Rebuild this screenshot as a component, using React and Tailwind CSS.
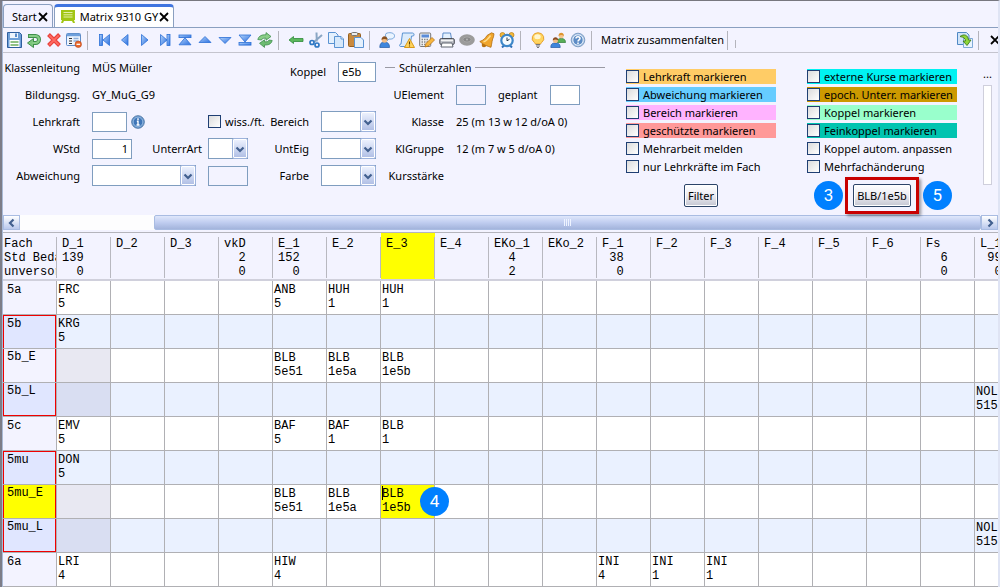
import React from "react";

const BLUE = "#2a6fd6";

const icons = {
  save: (
    <>
      <path d="M1.5.5h12l2 2v13h-14z" fill="#6fa0d8" stroke="#2f5f9e" />
      <rect x="4" y="1" width="8" height="5" fill="#eef4fc" />
      <rect x="9" y="1.5" width="2" height="3.5" fill="#5b8cc9" />
      <rect x="3.5" y="8" width="10" height="7" fill="#fff" />
      <path d="M4.5 10h8M4.5 13h8" stroke="#6cae5c" strokeWidth="1.4" />
    </>
  ),
  undo: (
    <>
      <path d="M2 4h7.500a3.500 3.500 0 0 1 0 7H6.500" fill="none" stroke="#3f8f4c" strokeWidth="4" />
      <path d="M7.500 6.500v9L1.500 11z" fill="#7cc67c" stroke="#3f8f4c" />
      <path d="M2.800 4h6.700a3.500 3.500 0 0 1 0 7H6" fill="none" stroke="#86cc86" strokeWidth="2.200" />
    </>
  ),
  remove: (
    <>
      <path d="M2.500 2.500l11 11M13.500 2.500l-11 11" stroke="#e8413c" strokeWidth="4" />
      <path d="M3.300 3.300l9.500 9.500M12.700 3.300l-9.500 9.500" stroke="#ff6a62" strokeWidth="1.800" />
    </>
  ),
  form: (
    <>
      <rect x=".5" y="1.500" width="14" height="12" rx="1" fill="#eef4fd" stroke="#5f8cc8" />
      <path d="M1 3h13" stroke="#6fa0dc" strokeWidth="2.500" />
      <path d="M3 6.500h3M3 9h3M3 11.500h3" stroke="#333" />
      <path d="M7.500 6.500h5M7.500 9h5" stroke="#8fb0dc" strokeWidth="1.500" />
      <circle cx="12.300" cy="12.300" r="3.200" fill="#e8672c" stroke="#b8451a" strokeWidth=".6" />
      <path d="M10.500 12.300h3.600" stroke="#fff" strokeWidth="1.300" />
    </>
  ),
  first: (
    <>
      <rect x="2.500" y="2.500" width="3" height="11" fill="url(#nav)" stroke={BLUE} strokeWidth=".8" />
      <path d="M12.500 2.500v11L6 8z" fill="url(#nav)" stroke={BLUE} strokeWidth=".8" />
    </>
  ),
  prev: <path d="M11 2.500v11L4.500 8z" fill="url(#nav)" stroke={BLUE} strokeWidth=".8" />,
  next: <path d="M4.500 2.500v11L11 8z" fill="url(#nav)" stroke={BLUE} strokeWidth=".8" />,
  last: (
    <>
      <path d="M3.500 2.500v11L10 8z" fill="url(#nav)" stroke={BLUE} strokeWidth=".8" />
      <rect x="10" y="2.500" width="3" height="11" fill="url(#nav)" stroke={BLUE} strokeWidth=".8" />
    </>
  ),
  top: (
    <>
      <rect x="2" y="3" width="12" height="2.600" fill="url(#nav)" stroke={BLUE} strokeWidth=".8" />
      <path d="M8 5.800l6 7H2z" fill="url(#nav)" stroke={BLUE} strokeWidth=".8" />
    </>
  ),
  up: <path d="M8 4.500l6 6H2z" fill="url(#nav)" stroke={BLUE} strokeWidth=".8" />,
  down: <path d="M8 11.500l6-6H2z" fill="url(#nav)" stroke={BLUE} strokeWidth=".8" />,
  bottom: (
    <>
      <path d="M8 10l6-7H2z" fill="url(#nav)" stroke={BLUE} strokeWidth=".8" />
      <rect x="2" y="10.500" width="12" height="2.600" fill="url(#nav)" stroke={BLUE} strokeWidth=".8" />
    </>
  ),
  refresh: (
    <>
      <path d="M.8 7.500C1.500 4.500 4 2.800 7.500 2.800h1.500V.6l5 3.900-5 3.700v-2H8C6 6.200 5 6.500 4.500 8z" fill="#8ace88" stroke="#3f8f4c" strokeWidth=".8" />
      <path d="M15.200 8.500c-.6 3-3.200 4.500-6.200 4.500H7.500v2.400l-5-4.100 5-3.500v2H9c1.500 0 2.500-.5 3-1.800z" fill="#6dbb72" stroke="#3f8f4c" strokeWidth=".8" />
    </>
  ),
  back: <path d="M1 8l4.500-3.500v2H15v3H5.500v2z" fill="#5cb85c" stroke="#2f8a3a" strokeWidth=".8" />,
  cut: (
    <>
      <path d="M8.500.5l.3 9M14 3L6 10" stroke="#8aa6c4" strokeWidth="2" />
      <circle cx="4" cy="10.500" r="2" fill="none" stroke="#2f78c4" strokeWidth="1.700" />
      <circle cx="9" cy="13" r="2" fill="none" stroke="#2f78c4" strokeWidth="1.700" />
    </>
  ),
  copy: (
    <>
      <path d="M.5.500h7l2.500 2.500v8.500H.5z" fill="#e4f0fd" stroke="#5a93d2" />
      <path d="M6.500 4.500H13l2.500 2.500v8.500h-9z" fill="#d6e8fb" stroke="#5a93d2" />
      <path d="M13 4.500V7h2.500" fill="#fff" stroke="#5a93d2" />
    </>
  ),
  paste: (
    <>
      <rect x=".5" y="1.500" width="12" height="13" rx="1" fill="#c98a3e" stroke="#96601f" />
      <rect x="3.500" y=".5" width="6" height="3" rx="1" fill="#ececec" stroke="#777" />
      <path d="M6.500 5.500H13L15.500 8v7.500h-9z" fill="#e4f0fd" stroke="#5a93d2" />
    </>
  ),
  chat: (
    <>
      <path d="M7 1.500c3-1.500 8-1 8.500 2 .3 3-3 4-5.500 3.500L8 9V6C6.500 5 6 3 7 1.500z" fill="#eaf4ff" stroke="#5a93d2" strokeWidth=".8" />
      <path d="M.8 15.500c0-4 1.700-5.500 4.700-5.500s5 1.500 5 5.500z" fill="#3f86dc" stroke="#2459a0" strokeWidth=".7" />
      <circle cx="5.500" cy="8" r="2.800" fill="#f2bd85" />
      <path d="M2.500 8c0-5 6-5 6 0-2-1.500-4-1.500-6 0z" fill="#8a5220" />
    </>
  ),
  docWarn: (
    <>
      <path d="M3.500 1h10c2 0 2 3 .5 3h-1.500L11 14.500H1.500c-1.300 0-1.300-2.500.5-2.500z" fill="#dcebfb" stroke="#5a93d2" />
      <path d="M10.500 6.500l5 9h-10z" fill="#ffd35a" stroke="#d99a1b" />
      <path d="M10.500 9.500v3M10.500 13.500v1" stroke="#5b3c00" strokeWidth="1.100" />
    </>
  ),
  calc: (
    <>
      <rect x=".7" y="1" width="11" height="13.500" rx="1" fill="#f2f2f2" stroke="#777" />
      <rect x="2.500" y="2.500" width="7.500" height="3" fill="#5b8cd8" />
      <path d="M2.500 7.500h7M2.500 10h7M2.500 12.500h5" stroke="#888" strokeWidth="1.500" strokeDasharray="1.500 1" />
      <path d="M6 15l1-3.500 6-6 2.500 2.500-6 6z" fill="#f7b63e" stroke="#b87417" strokeWidth=".8" />
    </>
  ),
  print: (
    <>
      <path d="M4 1h7.500l1 6h-9z" fill="#e4f0fd" stroke="#5f8cc8" />
      <rect x=".8" y="6.500" width="14.500" height="6" rx="1.500" fill="#b9bcc4" stroke="#4d4f57" />
      <path d="M2 8.500h12" stroke="#f4f4f4" strokeWidth="1.300" />
      <path d="M3 11h10l1 4H2z" fill="#fff" stroke="#5f646e" />
    </>
  ),
  disc: (
    <>
      <ellipse cx="8" cy="8" rx="7.800" ry="5.700" fill="#9b9b9b" />
      <ellipse cx="8" cy="7.500" rx="4" ry="2.500" fill="#888" stroke="#b0b0b0" strokeWidth=".6" />
      <circle cx="8" cy="7.500" r=".9" fill="#bbb" />
    </>
  ),
  bell: (
    <>
      <circle cx="5" cy="13" r="2.300" fill="#b87212" />
      <path d="M.8 9.500C5 8 6.500 6 8 3.500L12.500.8l2.500 1-.5 3c-1.500 3-1.500 6-2.500 10.500C9 14.500 3.500 12.500.8 9.500z" fill="#f0a52c" stroke="#b06c10" strokeWidth=".8" />
      <path d="M4.500 9.800c3.500-1 5-3.300 7-6.300" stroke="#ffdd8c" strokeWidth="1.700" fill="none" />
    </>
  ),
  clock: (
    <>
      <circle cx="3.500" cy="3" r="2.500" fill="#f5b83a" stroke="#b87d12" strokeWidth=".7" />
      <circle cx="12.500" cy="3" r="2.500" fill="#f5b83a" stroke="#b87d12" strokeWidth=".7" />
      <path d="M3 15.500l2-2M13 15.500l-2-2" stroke="#2f6fb8" strokeWidth="2" />
      <circle cx="8" cy="8.500" r="5.700" fill="#f6fbff" stroke="#3d86c8" strokeWidth="2.200" />
      <path d="M8 5.500v3.300l2.500-1.500" stroke="#234" fill="none" />
    </>
  ),
  bulb: (
    <>
      <path d="M8 .7a6 5.500 0 0 1 3.600 9.800L10.500 12h-5l-1.100-1.500A6 5.500 0 0 1 8 .7z" fill="#ffd560" stroke="#e39b26" strokeWidth=".9" />
      <ellipse cx="7.500" cy="4.800" rx="3.200" ry="2.500" fill="#fff6cf" />
      <path d="M5.700 12.500h4.600M6 14h4M7 15.500h2" stroke="#777" strokeWidth="1.200" />
    </>
  ),
  people: (
    <>
      <path d="M7 10.500c0-3 1.500-4 4.200-4s4.300 1 4.300 4z" fill="#58ae58" stroke="#2f7d36" strokeWidth=".7" />
      <circle cx="11.200" cy="3.800" r="2.500" fill="#f5c48f" />
      <path d="M8.500 4c0-4.500 5.500-4.500 5.500 0-2-1.500-3.500-1.500-5.500 0z" fill="#dd9430" />
      <path d="M.8 15.500c0-3.500 1.500-4.500 4.700-4.500s4.700 1 4.700 4.500z" fill="#3f86dc" stroke="#2459a0" strokeWidth=".7" />
      <circle cx="5.500" cy="8.500" r="2.500" fill="#f2bd85" />
      <path d="M2.700 8.500c0-4.500 5.600-4.500 5.600 0-2-1.500-3.600-1.500-5.600 0z" fill="#8a4a20" />
    </>
  ),
  help: (
    <>
      <circle cx="8" cy="8" r="6.800" fill="#a9c4e4" stroke="#7f9fc6" />
      <circle cx="8" cy="8" r="5.200" fill="#5d8cc6" stroke="#e6effa" />
      <path d="M6 6.500c0-2.500 4-2.500 4 0 0 1.300-2 1.500-2 3M8 10.600v1.500" stroke="#fff" strokeWidth="1.500" fill="none" />
    </>
  ),
  info: (
    <>
      <circle cx="8" cy="8" r="7.200" fill="#6b9bd0" stroke="#46709f" />
      <circle cx="8" cy="8" r="5.500" fill="#3f76b8" stroke="#a9c8ea" strokeWidth=".8" />
      <path d="M8 3.700v1.900M6.700 7.200H8v4.600M6.300 11.500h3.500" stroke="#fff" strokeWidth="1.600" fill="none" />
    </>
  ),
  transfer: (
    <>
      <path d="M.5.500h9L12 3v9.500H.5z" fill="#cfe3f8" stroke="#4f88c4" />
      <path d="M6.500 6.500h9v9h-9z" fill="#e8f3fe" stroke="#7fa9d6" />
      <path d="M3 4.500c4-3 8-1.500 8.500 3.500H14l-4 5.500L6 9h2.500c0-2.500-2-4-5.500-4.500z" fill="#8fd63a" stroke="#3d7a18" strokeWidth=".9" />
    </>
  ),
};

const Icon = ({ name, className = "size-4" }) => (
  <svg viewBox="0 0 16 16" className={className} aria-hidden="true">
    {icons[name]}
  </svg>
);

const toolGroups = [
  [["save", "Speichern"], ["undo", "Rückgängig"], ["remove", "Löschen"], ["form", "Formular"]],
  [
    ["first", "Erster"], ["prev", "Zurück"], ["next", "Weiter"], ["last", "Letzter"],
    ["top", "Anfang"], ["up", "Hoch"], ["down", "Runter"], ["bottom", "Ende"], ["refresh", "Aktualisieren"],
  ],
  [["back", "Verschieben"], ["cut", "Ausschneiden"], ["copy", "Kopieren"], ["paste", "Einfügen"]],
  [
    ["chat", "Kommentar"], ["docWarn", "Prüfen"], ["calc", "Berechnen"], ["print", "Drucken"],
    ["disc", "Status"], ["bell", "Erinnerung"], ["clock", "Termin"],
  ],
  [["bulb", "Tipp"], ["people", "Benutzer"], ["help", "Hilfe"]],
];

const Separator = () => <span className="ml-[3px] mr-[7px] h-[19px] w-px bg-[#b4b4bc]" />;

const Cross = () => (
  <svg viewBox="0 0 10 10" className="size-[10px]" aria-hidden="true">
    <path d="M1 1l8 8M9 1L1 9" stroke="#000" strokeWidth="1.8" />
  </svg>
);

const Tabs = () => (
  <div className="flex h-[27px] items-end gap-px border-b border-[#8a9fc0]">
    <button className="flex h-[23px] items-center gap-px rounded-t-sm border border-b-0 border-[#8a9fc0] pt-px pr-1 pl-2">
      Start <Cross />
    </button>
    <button className="flex h-[23px] items-center gap-px rounded-t-sm border border-t-[3px] border-b-0 border-[#8a9fc0] border-t-[#3f74e0] bg-white pr-1 pl-[5px]">
      <svg viewBox="0 0 16 14" className="mr-[3px] h-[14px] w-4" aria-hidden="true">
        <path d="M1 0h14v10h-1l1 3h-2l-1-2H4l-1 2H1l1-3H1z" fill="#a2c614" />
        <path d="M3.500 2.500h9M3.500 4.800h9M3.500 7h9" stroke="#e4f0a8" />
      </svg>
      Matrix 9310 GY <Cross />
    </button>
  </div>
);

const Toolbar = () => (
  <div className="flex h-[25px] items-center border-b border-[#c4c4ce] pl-px">
    {toolGroups.map((group, i) => (
      <React.Fragment key={i}>
        {group.map(([name, title]) => (
          <button key={name} aria-label={title} className="flex h-5 w-5 items-center justify-center">
            <Icon name={name} />
          </button>
        ))}
        <Separator />
      </React.Fragment>
    ))}
    <button className="pl-0.5">Matrix zusammenfalten</button>
    <Separator />
    <span className="mt-2 h-2 w-px bg-[#b4b4bc]" />
    <button aria-label="Übertragen" className="ml-auto flex h-5 w-5 items-center justify-center">
      <Icon name="transfer" />
    </button>
    <Separator />
    <button aria-label="Schließen" className="ml-1 w-2 overflow-hidden">
      <Cross />
    </button>
  </div>
);

const Chevron = ({ className }) => (
  <svg viewBox="0 0 10 10" className={className} aria-hidden="true">
    <path d="M1.500 3.500L5 7l3.500-3.500" fill="none" stroke="#42608f" strokeWidth="2.200" />
  </svg>
);

const Select = ({ id, className }) => (
  <span className={`relative block h-[21px] ${className}`}>
    <select id={id} className="h-full w-full appearance-none border border-[#7f9dbf] bg-white pr-4">
      <option></option>
    </select>
    <span className="pointer-events-none absolute inset-y-0 right-0 flex w-4 items-center justify-center rounded-xs border border-[#9db3dc] bg-linear-to-b from-[#f0f4ff] to-[#aebde4] ring-1 ring-white ring-inset">
      <Chevron className="size-[10px]" />
    </span>
  </span>
);

const Input = ({ className, ...props }) => (
  <input
    type="text"
    className={`h-5 border border-[#7f9dbf] bg-white px-[3px] read-only:bg-transparent ${className}`}
    {...props}
  />
);

const ClassForm = () => (
  <div className="grid auto-rows-[27px] grid-cols-[89px_116px_113px_55px] items-center">
    <span className="pr-3 text-right">Klassenleitung</span>
    <span>MÜS Müller</span>
    <div className="col-span-2 flex items-center justify-end gap-3 pt-2">
      <label htmlFor="koppel">Koppel</label>
      <Input id="koppel" defaultValue="e5b" className="w-[38px]" />
    </div>

    <span className="pr-3 text-right">Bildungsg.</span>
    <span className="col-span-3">GY_MuG_G9</span>

    <label htmlFor="lehrkraft" className="pr-3 text-right">Lehrkraft</label>
    <div className="flex items-center gap-1">
      <Input id="lehrkraft" className="w-[35px]" />
      <button aria-label="Info">
        <Icon name="info" className="size-[14px]" />
      </button>
    </div>
    <div className="flex items-center justify-between pr-3">
      <label className="flex items-center gap-1">
        <input type="checkbox" className="size-[13px] appearance-none border border-[#1f3f73] bg-linear-to-br from-[#dcdcdc] to-white" />
        wiss./ft.
      </label>
      <label htmlFor="bereich">Bereich</label>
    </div>
    <Select id="bereich" />

    <label htmlFor="wstd" className="pr-3 text-right">WStd</label>
    <div className="flex items-center justify-between pr-1.5">
      <Input id="wstd" defaultValue="1" className="w-10 text-right" />
      <label htmlFor="unterrart">UnterrArt</label>
    </div>
    <div className="flex items-center justify-between pr-3">
      <Select id="unterrart" className="w-10" />
      <label htmlFor="unteig">UntEig</label>
    </div>
    <Select id="unteig" />

    <label htmlFor="abweichung" className="pr-3 text-right">Abweichung</label>
    <Select id="abweichung" className="w-[104px]" />
    <div className="flex items-center justify-between pr-3">
      <Input aria-label="Abweichung Wert" readOnly className="w-10" />
      <label htmlFor="farbe">Farbe</label>
    </div>
    <Select id="farbe" />
  </div>
);

const StudentNumbers = () => (
  <section className="w-[220px]">
    <h2 className="flex h-[27px] items-center gap-1 whitespace-nowrap">
      <span className="h-px w-[10px] bg-[#9a9aa4]" />
      Schülerzahlen
      <span className="h-px flex-1 bg-[#9a9aa4]" />
    </h2>
    <div className="grid auto-rows-[27px] grid-cols-[59px_1fr] items-center gap-x-3">
      <label htmlFor="uelement" className="text-right">UElement</label>
      <div className="flex items-center gap-3">
        <Input id="uelement" readOnly className="w-[30px]" />
        <label htmlFor="geplant">geplant</label>
        <Input id="geplant" className="w-[30px]" />
      </div>
      <span className="text-right">Klasse</span>
      <span>25 (m 13 w 12 d/oA 0)</span>
      <span className="text-right">KlGruppe</span>
      <span>12 (m 7 w 5 d/oA 0)</span>
      <span className="text-right">Kursstärke</span>
    </div>
  </section>
);

const markersLeft = [
  ["Lehrkraft markieren", "bg-[#ffcc66]"],
  ["Abweichung markieren", "bg-[#66ccff]"],
  ["Bereich markieren", "bg-[#ffb3ff]"],
  ["geschützte markieren", "bg-[#ff9999]"],
  ["Mehrarbeit melden", ""],
  ["nur Lehrkräfte im Fach", ""],
];

const markersRight = [
  ["externe Kurse markieren", "bg-[#00f2f2]"],
  ["epoch. Unterr. markieren", "bg-[#cc9900]"],
  ["Koppel markieren", "bg-[#99ffcc]"],
  ["Feinkoppel markieren", "bg-[#00c4b0]"],
  ["Koppel autom. anpassen", ""],
  ["Mehrfachänderung", ""],
];

const MarkerList = ({ items }) => (
  <div className="flex w-[150px] flex-col gap-[3px]">
    {items.map(([label, color]) => (
      <label key={label} className={`flex h-[15px] items-center gap-1 whitespace-nowrap ${color}`}>
        <input type="checkbox" className="size-[13px] appearance-none border border-[#1f3f73] bg-linear-to-br from-[#dcdcdc] to-white" />
        {label}
      </label>
    ))}
  </div>
);

const PushButton = ({ children }) => (
  <button className="h-[23px] rounded-xs border border-[#2c4468] bg-linear-to-b from-white via-[#ececf2] to-[#c4c6d2] px-[3px] ring-1 ring-white ring-inset">
    {children}
  </button>
);

const Badge = ({ children, className }) => (
  <span
    className={`absolute z-10 flex size-[29px] items-center justify-center rounded-full bg-[#0080ff] font-[Roboto,sans-serif] text-[17px] leading-none text-white ${className}`}
  >
    {children}
  </span>
);

const Markers = () => (
  <div className="flex gap-[31px] pt-[15px]">
    <div className="flex flex-col items-center">
      <MarkerList items={markersLeft} />
      <div className="pt-[10px]">
        <PushButton>Filter</PushButton>
      </div>
    </div>
    <div className="flex flex-col items-center">
      <MarkerList items={markersRight} />
      <div className="relative mt-[3px] border-[3px] border-[#c80000] px-[5px] py-1 shadow-[2px_2px_3px_rgba(0,0,0,0.4)]">
        <PushButton>BLB/1e5b</PushButton>
        <Badge className="top-px -left-[34px]">3</Badge>
        <Badge className="top-px -right-[36px]">5</Badge>
      </div>
    </div>
  </div>
);

const ScrollBar = () => (
  <div className="flex h-[15px] bg-[#fdfdfe]">
    <button aria-label="Nach links" className="flex w-[17px] items-center justify-center border border-[#a9bce2] bg-linear-to-b from-white to-[#b9c8ec]">
      <Chevron className="size-[10px] rotate-90" />
    </button>
    <div className="flex flex-1 pl-[134px]">
      <div className="flex flex-1 items-center justify-center gap-px rounded-xs border border-[#a9bce2] bg-linear-to-b from-[#dfe7fb] via-[#c0cdf0] to-[#a3b4dc]">
        {[0, 1, 2, 3].map((n) => (
          <span key={n} className="h-[7px] w-px bg-[#eef3ff]" />
        ))}
      </div>
    </div>
    <button aria-label="Nach rechts" className="flex w-[17px] items-center justify-center border border-[#a9bce2] bg-linear-to-b from-white to-[#b9c8ec]">
      <Chevron className="size-[10px] -rotate-90" />
    </button>
  </div>
);

const columns = [
  "D_1\n139\n  0", "D_2", "D_3", "vkD\n  2\n  0", "E_1\n152\n  0", "E_2", "E_3", "E_4",
  "EKo_1\n  4\n  2", "EKo_2", "F_1\n 38\n  0", "F_2", "F_3", "F_4", "F_5", "F_6",
  "Fs\n  6\n  0", "L_1\n 99\n  0",
];

// group: position of the row inside a red framed block
const rows = [
  { name: "5a", cells: { 0: "FRC\n5", 4: "ANB\n5", 5: "HUH\n1", 6: "HUH\n1" } },
  { name: "5b", group: "start", cells: { 0: "KRG\n5" } },
  { name: "5b_E", group: "middle", locked: true, cells: { 4: "BLB\n5e51", 5: "BLB\n1e5a", 6: "BLB\n1e5b" } },
  { name: "5b_L", group: "end", locked: true, cells: { 17: "NOL\n515" } },
  { name: "5c", cells: { 0: "EMV\n5", 4: "BAF\n5", 5: "BAF\n1", 6: "BLB\n1" } },
  { name: "5mu", group: "start", cells: { 0: "DON\n5" } },
  { name: "5mu_E", group: "middle", locked: true, active: true, cells: { 4: "BLB\n5e51", 5: "BLB\n1e5a", 6: "BLB\n1e5b" } },
  { name: "5mu_L", group: "end", locked: true, cells: { 17: "NOL\n515" } },
  { name: "6a", cells: { 0: "LRI\n4", 4: "HIW\n4", 10: "INI\n4", 11: "INI\n1", 12: "INI\n1" } },
];

const groupBorder = {
  start: "border-x border-t border-[#f00000] pt-px",
  middle: "border-x border-[#f00000] pt-px",
  end: "border-x border-b border-[#f00000] pt-px",
};

const cellColor = (row, odd, col) => {
  if (row.active && col === 6) return "bg-[#ffff00]";
  if (row.locked && col === 0) return odd ? "bg-[#d9def2]" : "bg-[#e8e8f2]";
  return odd ? "bg-[#eaf1ff]" : "bg-white";
};

const labelColor = (row, odd) => {
  if (row.active) return "bg-[#ffff00]";
  return odd ? "bg-[#e0e6ff]" : "bg-[#f3f3ff]";
};

const Matrix = () => (
  <div className="mt-0.5 overflow-hidden border-t border-[#b4b4bc]">
    <table className="w-[1026px] table-fixed border-separate border-spacing-0 font-['Liberation_Mono',monospace] text-[12px] leading-[14px]">
      <thead>
        <tr className="h-12 align-top">
          <th className="overflow-hidden border-b-2 border-[#d0d0dc] p-0 text-left font-normal">
            <div className="mt-1 h-[41px] overflow-hidden border-r border-[#b8b8c0] pl-px whitespace-pre">
              {"Fach\nStd Beda\nunversor"}
            </div>
          </th>
          {columns.map((text, i) => (
            <th
              key={i}
              className={`border-b-2 border-[#d0d0dc] p-0 text-left font-normal ${i === 6 ? "bg-[#ffff00]" : ""}`}
            >
              <div className="mt-1 h-[41px] border-r border-[#b8b8c0] pl-[5px] whitespace-pre">{text}</div>
            </th>
          ))}
        </tr>
      </thead>
      <tbody>
        {rows.map((row, r) => {
          const odd = r % 2 === 1;
          return (
            <tr key={row.name} className="h-[34px] align-top">
              <th className={`border-r border-b border-[#b0b0b4] p-0 text-left font-normal ${labelColor(row, odd)}`}>
                <div className={`h-[33px] pl-[3px] ${row.group ? groupBorder[row.group] : "border-l border-transparent pt-0.5"}`}>
                  {row.name}
                </div>
              </th>
              {columns.map((_, c) => {
                const cursor = row.active && c === 6;
                return (
                  <td
                    key={c}
                    className={`relative border-r border-b border-[#b0b0b4] p-0 pt-0.5 pl-px whitespace-pre ${cellColor(row, odd, c)}`}
                  >
                    {cursor && <span className="absolute top-px left-px h-[14px] w-px bg-black" />}
                    {row.cells[c]}
                    {cursor && <Badge className="top-[2px] left-[39px]">4</Badge>}
                  </td>
                );
              })}
            </tr>
          );
        })}
      </tbody>
    </table>
  </div>
);

const App = () => {
  return (
    <div className="overflow-hidden border-t border-r-2 border-l-2 border-t-[#77777f] border-r-[#dfe4f4] border-l-[#7d7d88] bg-[#f3f3ff] font-['Noto_Sans',sans-serif] text-[11px] leading-[14px] text-black">
      <svg className="absolute size-0" aria-hidden="true">
        <linearGradient id="nav" x1="0" y1="0" x2="1" y2="1">
          <stop offset="0" stopColor="#b4d4fa" />
          <stop offset="1" stopColor="#2a6fe0" />
        </linearGradient>
      </svg>
      <div className="border-l border-[#a9bad6]">
        <Tabs />
        <Toolbar />
        <div className="flex h-[162px] items-start pt-px">
          <ClassForm />
          <div className="ml-[9px]">
            <StudentNumbers />
          </div>
          <div className="ml-auto pr-[26px]">
            <Markers />
          </div>
          <div className="flex flex-col items-center gap-[3px] pt-[12px] pr-[6px]">
            <button aria-label="Mehr" className="leading-[16px]">...</button>
            <div className="h-[100px] w-[9px] border border-[#cfcfdc] bg-white" />
          </div>
        </div>
        <ScrollBar />
        <Matrix />
      </div>
    </div>
  );
};

export default App;
